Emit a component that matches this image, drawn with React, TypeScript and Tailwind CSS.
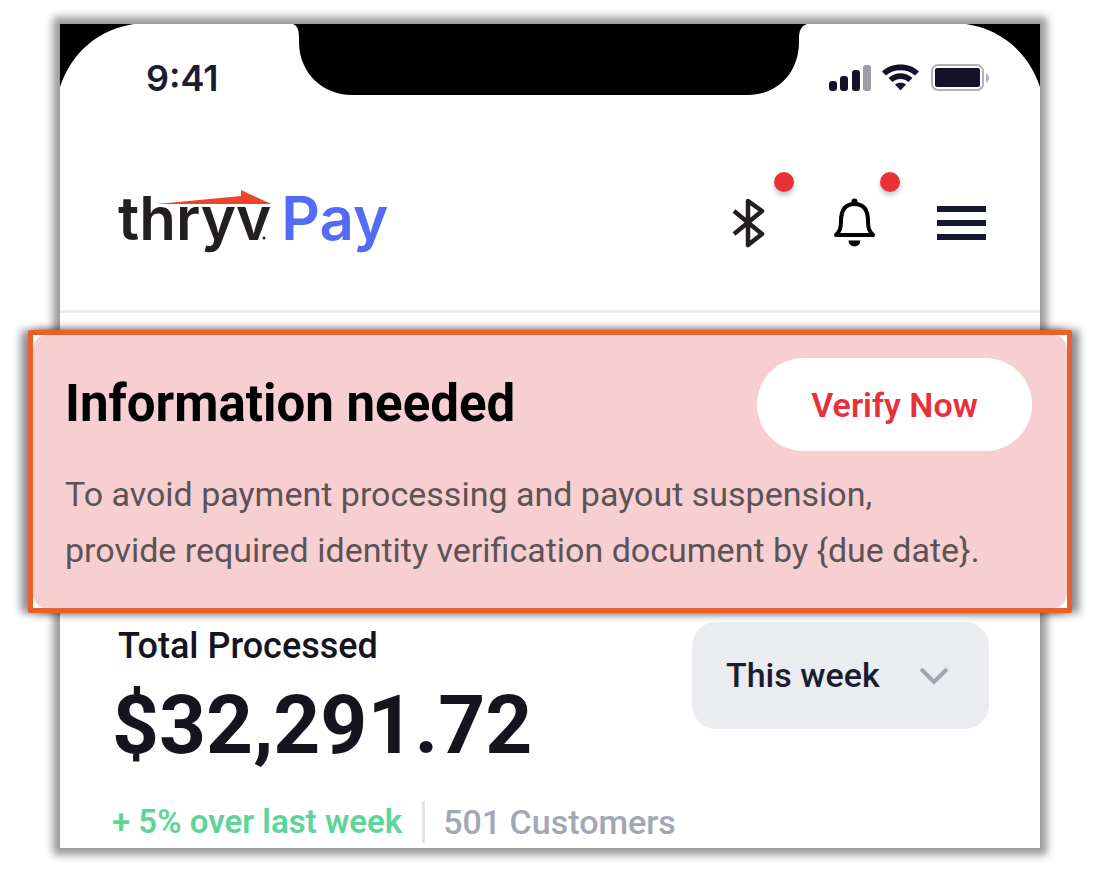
import React from "react";

function Corner({ className }: { className: string }) {
  return (
    <svg className={className} width="74" height="63" viewBox="0 0 74 63" aria-hidden="true">
      <path d="M0 0H74C40 5 12 27 0 63Z" fill="#000" />
    </svg>
  );
}

function Notch() {
  return (
    <svg width="514" height="72" viewBox="0 0 514 72" className="shrink-0" aria-hidden="true">
      <path
        d="M0 0H514C508 2 506 7 506 14V18C506 49 484 71 455 71H59C30 71 6 49 6 18V14C6 7 5 2 0 0Z"
        fill="#000"
      />
    </svg>
  );
}

function StatusIcons() {
  return (
    <svg width="162" height="30" viewBox="0 0 162 30" role="img" aria-label="Signal, Wi-Fi and battery">
      <g fill="#14112b">
        <rect x="1" y="18" width="8" height="10" rx="3" />
        <rect x="12" y="13" width="8" height="15" rx="3" />
        <rect x="24" y="7" width="8" height="21" rx="3" />
        <rect x="35" y="2" width="8" height="26" rx="3" fill="#9d9ba5" />
        <path d="M54 8.500C63 -1 82 -1 91 8.500L87 12.500C79.500 5.500 65.500 5.500 58 12.500Z" />
        <path d="M60.500 15C67 8.500 78 8.500 84.500 15L80.500 19C76 15 69 15 64.500 19Z" />
        <path d="M67 21.500C70 19 75 19 78 21.500L72.500 27.500Z" />
        <rect x="107" y="5" width="45" height="19" rx="2" />
      </g>
      <rect x="104" y="2" width="51" height="25" rx="6" fill="none" stroke="#b3b1bc" strokeWidth="2" />
      <path d="M158 10.500C162 12 162 18 158 19.500Z" fill="#b3b1bc" />
    </svg>
  );
}

function Logo() {
  return (
    <a href="#" className="relative flex items-baseline gap-2.5 font-[Inter,sans-serif] text-[60px] leading-[72px] font-semibold">
      <span className="text-[#231f20]">thryv</span>
      <span className="text-[#536bf7]">Pay</span>
      <svg className="absolute top-2 left-[39px]" width="116" height="54" viewBox="0 0 116 54" aria-hidden="true">
        <path d="M0 14L84 6V0L114 14Z" fill="#e8452c" />
        <circle cx="107" cy="48" r="1.500" fill="#231f20" />
      </svg>
    </a>
  );
}

function AlertDot({ className }: { className: string }) {
  return (
    <span className={`absolute -top-[26px] size-5 rounded-full bg-[#ea3236] shadow-[0_4px_5px_rgba(0,0,0,0.2)] ${className}`} />
  );
}

function HeaderActions() {
  return (
    <nav className="flex items-center pt-2.5">
      <button aria-label="Bluetooth" className="relative mr-[68px]">
        <svg width="33" height="50" viewBox="0 0 33 50" fill="none" stroke="#231f20" strokeWidth="4.500" strokeLinejoin="round">
          <path d="M2 13L30 36L16 47V3L30 13L2 36" />
        </svg>
        <AlertDot className="-right-[29px]" />
      </button>
      <button aria-label="Notifications" className="relative mr-[61px]">
        <svg width="43" height="50" viewBox="0 0 43 50">
          <path
            d="M3 37C7 33 8 30 8 23C8 12 12 6 21.500 6S35 12 35 23C35 30 36 33 40 37Z"
            fill="none"
            stroke="#000"
            strokeWidth="4"
            strokeLinejoin="round"
          />
          <path d="M18.500 6V3.500A3 3 0 0 1 24.500 3.500V6Z" />
          <path d="M15.500 42.500H27.500A6 6 0 0 1 15.500 42.500Z" />
        </svg>
        <AlertDot className="-right-6" />
      </button>
      <button aria-label="Menu" className="flex w-[49px] flex-col gap-2">
        <span className="h-1.5 w-full bg-[#15162f]" />
        <span className="h-1.5 w-full bg-[#15162f]" />
        <span className="h-1.5 w-full bg-[#15162f]" />
      </button>
    </nav>
  );
}

function VerificationBanner() {
  return (
    <section className="relative -mx-8 rounded-xs border-[5px] border-[#e95f2d] bg-white shadow-[-7px_0_8px_rgba(0,0,0,0.45),7px_0_8px_rgba(0,0,0,0.45)]">
      <div className="rounded-[14px] bg-[#f7cfd1] px-8 pt-[23px] pb-[30px]">
        <div className="-mr-[3px] flex items-center justify-between pr-1.5">
          <h1 className="pb-0.5 text-[51px] leading-[60px] font-bold text-black">Information needed</h1>
          <button className="h-[93px] w-[275px] rounded-full bg-white pt-0.5 text-[34px] font-semibold text-[#e8303a]">
            Verify Now
          </button>
        </div>
        <p className="mt-[15px] text-[34px] leading-[56px] text-[#5d5355]">
          To avoid payment processing and payout suspension,
          <br />
          provide required identity verification document by {"{due date}"}.
        </p>
      </div>
    </section>
  );
}

function Summary() {
  return (
    <section className="flex items-start justify-between pt-[9px] pr-[51px] pb-[5px] pl-[52px]">
      <div>
        <h2 className="pl-1.5 text-[36px] leading-[48px] font-medium text-[#15151f]">Total Processed</h2>
        <p className="mt-[15px] text-[82px] leading-[80px] font-bold text-[#15151f]">$32,291.72</p>
        <div className="mt-9 flex items-center leading-[42px]">
          <span className="text-[33px] font-semibold text-[#5ed49a]">+ 5% over last week</span>
          <span className="ml-5 border-l-[3px] border-[#e4e5ea] pl-[18px] text-[34px] font-medium text-[#a3a6b4]">
            501 Customers
          </span>
        </div>
      </div>
      <div className="relative">
        <select
          aria-label="Period"
          className="h-[107px] w-[297px] appearance-none rounded-3xl bg-[#ebecf0] pl-[34px] text-[34px] font-medium text-[#1b1c33]"
        >
          <option>This week</option>
        </select>
        <svg className="pointer-events-none absolute top-11 right-10" width="30" height="20" viewBox="0 0 30 20" fill="none" stroke="#a0a4b0" strokeWidth="4">
          <path d="M2 3L15 16L28 3" />
        </svg>
      </div>
    </section>
  );
}

export default function App() {
  return (
    <div className="bg-white pt-6 pr-[58px] pb-7 pl-[60px] font-[Roboto,sans-serif]">
      <main className="bg-white shadow-[0_0_8px_7px_#999]">
        <div className="relative grid grid-cols-[1fr_auto_1fr] items-start">
          <Corner className="absolute top-0 left-0" />
          <Corner className="absolute top-0 right-0 -scale-x-100" />
          <div className="pt-[33px] pl-[86px] font-[Inter,sans-serif] text-[36px] leading-[42px] font-semibold text-[#1d1b33]">
            9:41
          </div>
          <Notch />
          <div className="flex justify-end pt-[39px] pr-[50px]">
            <StatusIcons />
          </div>
        </div>
        <header className="flex items-center justify-between border-b-[3px] border-[#ebecf0] pt-[83px] pr-[54px] pb-[56px] pl-[58px]">
          <Logo />
          <HeaderActions />
        </header>
        <div className="pt-[17px]">
          <VerificationBanner />
        </div>
        <Summary />
      </main>
    </div>
  );
}
